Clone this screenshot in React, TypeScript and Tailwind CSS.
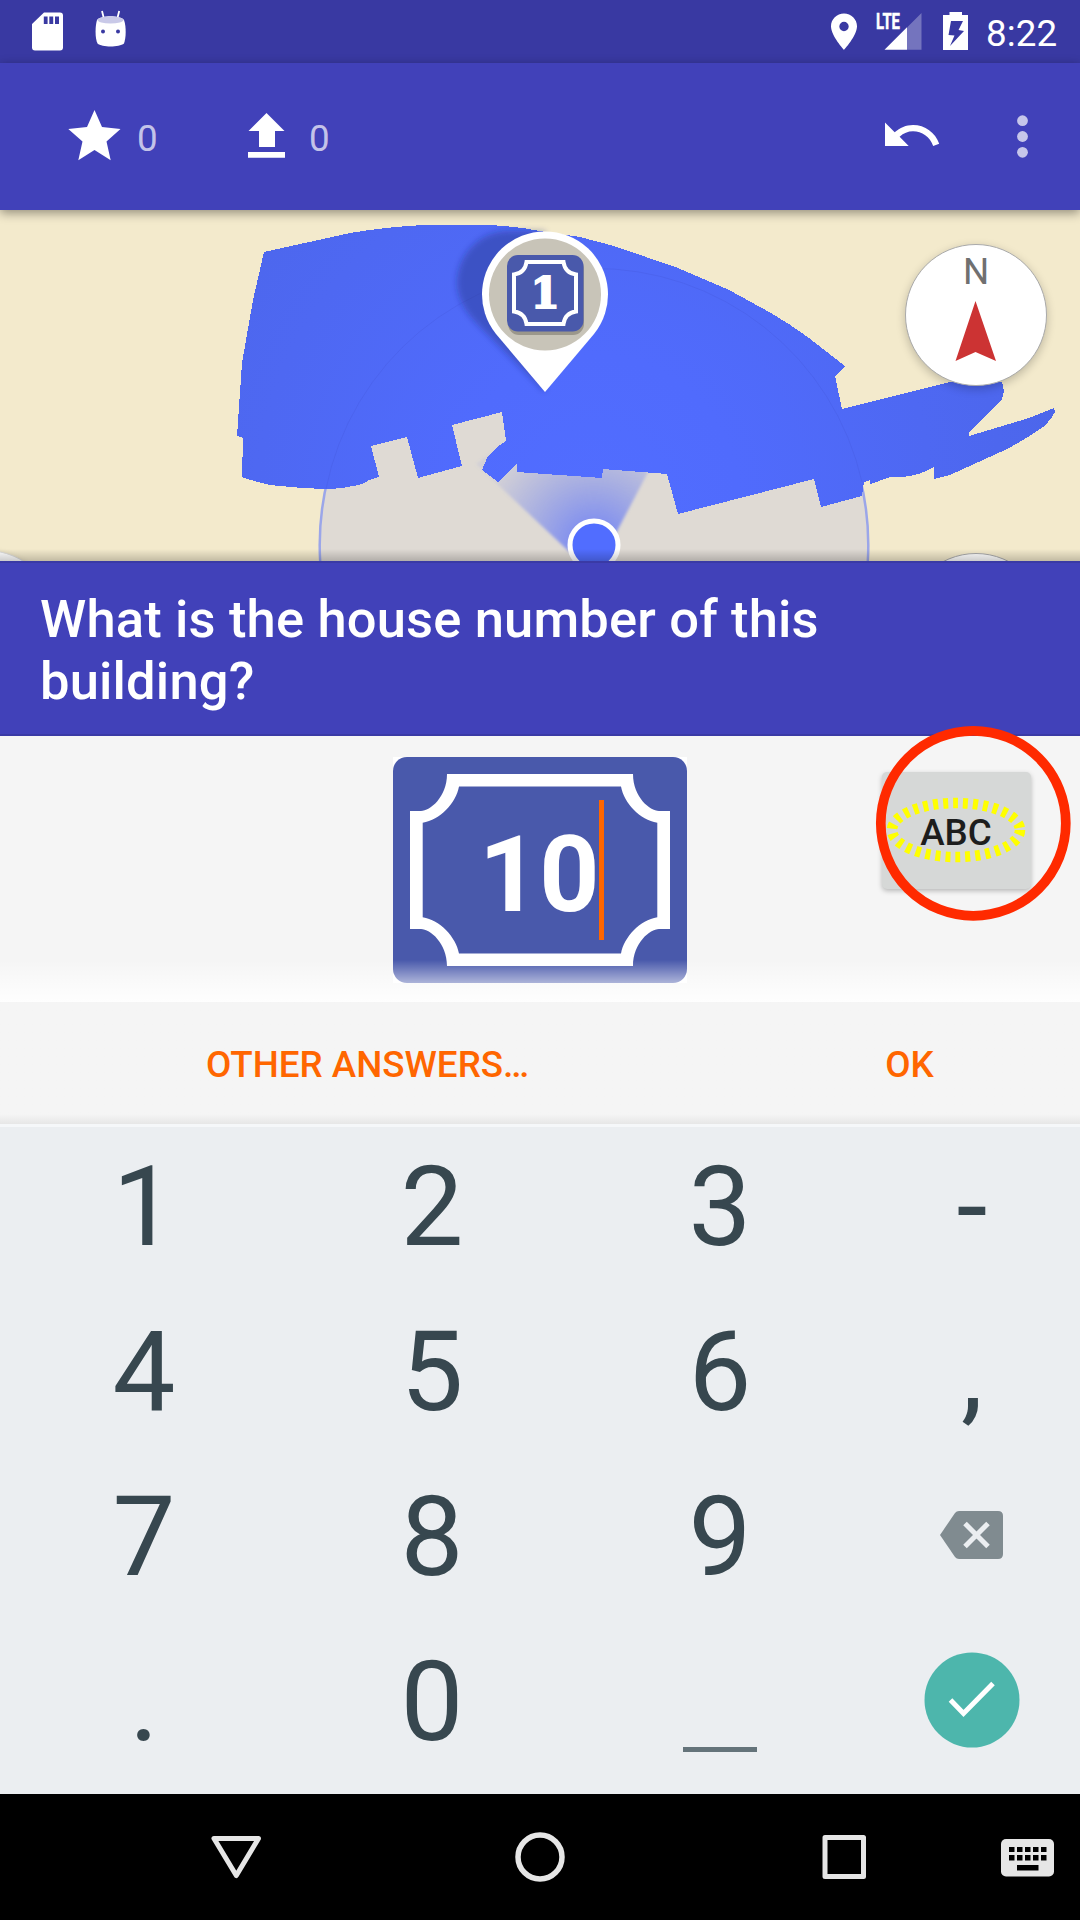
import type { ReactNode } from "react";

function StatusBar() {
  return (
    <div className="flex h-[63px] shrink-0 justify-between bg-[#3939a2]">
      <svg className="h-[63px] w-[160px]" viewBox="0 0 160 63">
        <path
          fillRule="evenodd"
          fill="#fff"
          d="M44 12.5H60a3 3 0 0 1 3 3V47.500a3 3 0 0 1-3 3H35a3 3 0 0 1-3-3V24ZM43.800 16.500V24H47.600V16.500ZM49.300 16.500V24H53.200V16.500ZM55 16.500V24H59V16.500Z"
        />
        <path stroke="#fff" strokeWidth="1.8" d="M102 11 104 19M119.200 11 117.200 19" />
        <path
          fill="#fff"
          d="M97 20C101 15 120 15 124 20C126.500 27 126 38 124 43.500C119 47.500 102 47.500 97.500 43.500C95 38 95 27 97 20Z"
        />
        <ellipse cx="110.500" cy="20" rx="13" ry="3.500" fill="#c9c9e8" />
        <circle cx="103" cy="31.500" r="2" fill="#3939a2" />
        <circle cx="118" cy="31.500" r="2" fill="#3939a2" />
      </svg>
      <div className="flex">
        <svg className="h-[63px] w-[165px]" viewBox="820 0 165 63">
          <path
            fillRule="evenodd"
            fill="#fff"
            d="M844 13.500c-7.200 0-13 5.700-13 12.800 0 9.400 13 23.700 13 23.700s13-14.300 13-23.700c0-7.100-5.800-12.800-13-12.800Zm0 8.300a4.700 4.700 0 1 1 0 9.400 4.700 4.700 0 0 1 0-9.400Z"
          />
          <text
            x="876"
            y="29"
            textLength="24"
            lengthAdjust="spacingAndGlyphs"
            fill="#fff"
            stroke="#fff"
            strokeWidth=".5"
            className="font-['Roboto'] text-[22px] font-bold"
          >
            LTE
          </text>
          <path fill="#fff" fillOpacity=".3" d="M907 27.500 921.500 13V49.700H907Z" />
          <path fill="#fff" d="M884.500 49.700 907 27.300V49.700Z" />
          <path
            fillRule="evenodd"
            fill="#fff"
            d="M949.500 12H962V15H968V50H943V15H949.500ZM951 21 948.500 35 954.500 35.500 950 46 964 31 958.500 30 963 21Z"
          />
        </svg>
        <span className="mr-[21px] w-[74px] pt-[12px] pl-px text-[36.75px] leading-[43px] font-[450] tracking-[0.1px] text-white">
          8:22
        </span>
      </div>
    </div>
  );
}

function Toolbar() {
  return (
    <div className="z-10 flex h-[147px] shrink-0 items-center bg-[#4141b9] shadow-[0_3px_10px_rgba(0,0,0,0.4)]">
      <svg className="ml-[64px] h-[147px] w-[60px]" viewBox="64 63 60 147">
        <path
          fill="#fff"
          d="M94.500 110 102 127 120.500 129 106.500 141.500 110.700 160.300 94.500 150 78.300 160.300 82.500 141.500 68.300 129 87 127Z"
        />
      </svg>
      <span className="ml-[13px] w-[21px] pt-[3px] text-[36.75px] leading-[43px] text-white/70">0</span>
      <svg className="ml-[82px] h-[147px] w-[56px]" viewBox="240 63 56 147">
        <path fill="#fff" d="M266.500 113 284.500 131H275V147H259V131H248.500ZM248 152H285V157.700H248Z" />
      </svg>
      <span className="ml-[13px] w-[21px] pt-[3px] text-[36.75px] leading-[43px] text-white/70">0</span>
      <svg className="ml-auto h-[147px] w-[210px]" viewBox="870 63 210 147">
        <path
          fill="#fff"
          d="M885 122.500 894.700 132.200C900 127.800 906 125 913 125C925 125 935.300 132.500 939.200 143.800L933.200 146C930 137 922 131.300 913 131.300C908 131.300 903.500 133.200 899.600 136.700L908.700 146H885Z"
        />
        <g fill="#fff" fillOpacity=".7">
          <circle cx="1022.500" cy="120.700" r="5.400" />
          <circle cx="1022.500" cy="136.500" r="5.400" />
          <circle cx="1022.500" cy="152.300" r="5.400" />
        </g>
      </svg>
    </div>
  );
}

const AREA =
  "M264 252 350 233Q386 227 423 225H487Q515 226 540 231L580 237 614 246 678 268 729 290 771 313Q790 324 809 338L845 366 835 376 842 409 950 382H1002L1004 391 1002 399 988 413 969 432V436L1029 418 1054 408 1055 412Q1050 421 1043 427Q1026 439 1005 450L950 475 934 479V467Q919 476 902 477H890.500L870.500 484 870 480 864 482 862 496 821 507 814 479 678 514 667 474 603 469 602 478 517 472V463L498 482 482 470 487 458Q494 448 506 441L502 412 452 425 462 466 418 478 407 437 371 446 379 477 369 480Q363 485 353 486Q340 489 323 489Q297 488 270 485Q256 482 242 477L243 438 237 436 242 363 253 300Z";

function MapView() {
  return (
    <div className="relative h-[351px] shrink-0 overflow-hidden bg-[#f3eacc] font-['Roboto']">
      <svg className="block h-[351px] w-full" viewBox="0 210 1080 351">
        <defs>
          <radialGradient id="area" gradientUnits="userSpaceOnUse" cx="594" cy="500" r="480">
            <stop offset="0" stopColor="#516dff" />
            <stop offset=".3" stopColor="#506bfd" />
            <stop offset=".7" stopColor="#4e68f2" />
            <stop offset="1" stopColor="#4c66ea" />
          </radialGradient>
          <radialGradient id="beam" gradientUnits="userSpaceOnUse" cx="594" cy="545" r="118">
            <stop offset=".2" stopColor="#7485f2" stopOpacity=".85" />
            <stop offset="1" stopColor="#7c8de8" stopOpacity=".12" />
          </radialGradient>
          <filter id="soft" x="-20%" y="-20%" width="140%" height="140%">
            <feGaussianBlur stdDeviation="3" />
          </filter>
          <filter id="edge" x="-20%" y="-20%" width="140%" height="140%">
            <feGaussianBlur stdDeviation="1.7" />
          </filter>
        </defs>
        <circle cx="594" cy="545" r="274.300" fill="#dfdad4" stroke="#9ba6e9" strokeWidth="2.500" />
        <path d="M594 575 476 464 530 425 657 455Z" fill="url(#beam)" filter="url(#edge)" />
        <path d={AREA} fill="url(#area)" shapeRendering="crispEdges" />
        <path d="M326 489A274 274 0 0 1 862 482" fill="none" stroke="#4559dc" strokeOpacity=".35" strokeWidth="1" />
        <circle cx="594" cy="545" r="24" fill="#516dff" stroke="#fff" strokeWidth="5" />
        <path
          d="M545 392 476 323C464 310 457 297 457 282A52 52 0 0 1 509 231H545Z"
          fill="#1c246c"
          fillOpacity=".36"
          filter="url(#soft)"
        />
        <path d="M545 392 496 334A63 63 0 1 1 594 334Z" fill="#fff" />
        <circle cx="545" cy="294.500" r="56" fill="#c8c4b8" />
        <rect x="508" y="258" width="76" height="77" rx="11" fill="#9b978b" />
        <rect x="507" y="255" width="76.500" height="76.500" rx="11" fill="#4959ab" />
        <path
          d="M526.500 262H563.500Q565 273 576 274.500V311.500Q565 313 563.500 324H526.500Q525 313 514 311.500V274.500Q525 273 526.500 262Z"
          fill="none"
          stroke="#fff"
          strokeWidth="4"
        />
        <text
          x="545"
          y="308"
          textAnchor="middle"
          fill="#fff"
          stroke="#fff"
          strokeWidth="1.8"
          className="font-['DejaVu_Serif'] text-[42px] font-bold"
        >
          1
        </text>
      </svg>
      <div className="absolute top-[34px] left-[905px] flex h-[142px] w-[142px] flex-col items-center rounded-full border border-[#aaa] bg-white shadow-[0_3px_10px_rgba(0,0,0,0.22)]">
        <span className="mt-[5px] text-[36.75px] leading-[43px] text-[#707070]">N</span>
        <svg className="mt-[8px] h-[60px] w-[42px]" viewBox="0 0 42 60">
          <path fill="#cc3333" d="M20.500 0 41 60 20.500 51 .5 60Z" />
        </svg>
      </div>
      <div className="absolute top-[343px] left-[905px] h-[142px] w-[142px] rounded-full border border-[#aaa] bg-white" />
      <div className="absolute top-[340px] left-[-85px] h-[142px] w-[142px] rounded-full border border-[#ddd] bg-white shadow-[0_2px_6px_rgba(0,0,0,0.15)]" />
      <div className="absolute bottom-0 left-0 h-[12px] w-full bg-linear-to-t from-black/20 to-transparent" />
    </div>
  );
}

function HouseNumberSign() {
  return (
    <div className="relative h-[226px] w-[294px] bg-white">
      <svg className="block h-full w-full" viewBox="393 757 294 226">
        <rect x="393" y="757" width="294" height="226" rx="14" fill="#4959ab" />
        <path
          fillRule="evenodd"
          fill="#fff"
          d="M447 774H633C633 797 650 811 659 811H670V929H659C650 929 633 943 633 966H447C447 943 430 929 421 929H410V811H421C430 811 447 797 447 774ZM459 786.500C456 803 440 820 422.700 822.800V917.200C440 920 456 937 459 953.500H621C624 937 640 920 657.300 917.200V822.800C640 820 624 803 621 786.500Z"
        />
      </svg>
      <div className="absolute top-[43px] left-[86px] flex h-[140px] items-center">
        <span className="pt-[12px] text-[105px] leading-[140px] font-bold text-white">10</span>
        <span className="h-[140px] w-[5px] bg-[#ff6600]" />
      </div>
    </div>
  );
}

function Key({ children }: { children?: ReactNode }) {
  return <div className="flex h-[165px] items-center justify-center">{children}</div>;
}

function Keypad() {
  return (
    <div className="grid h-[667px] shrink-0 grid-cols-[288px_288px_288px_216px] content-start bg-[#ebeef1] text-[112px] leading-[131px] text-[#37474f]">
      {["1", "2", "3", "-", "4", "5", "6", ",", "7", "8", "9"].map((k) => (
        <Key key={k}>
          <span className="pb-[6px]">{k}</span>
        </Key>
      ))}
      <Key>
        <svg className="mb-[10px] h-[48px] w-[64px]" viewBox="0 0 64 48">
          <path fill="#808b90" d="M0 24 15 2Q16.500 0 19 0H58Q63 0 63 5V43Q63 48 58 48H19Q16.500 48 15 46Z" />
          <path stroke="#ebeef1" strokeWidth="5" d="M25 12.500 48 35.500M48 12.500 25 35.500" />
        </svg>
      </Key>
      <Key>
        <span className="pb-[6px]">.</span>
      </Key>
      <Key>
        <span className="pb-[6px]">0</span>
      </Key>
      <Key>
        <div className="mt-[89px] h-[5px] w-[74px] bg-[#64737a]" />
      </Key>
      <Key>
        <svg className="mb-[9px] h-[96px] w-[96px]" viewBox="924 1652 96 96">
          <circle cx="972" cy="1700" r="47.500" fill="#4db6ac" />
          <path fill="none" stroke="#fff" strokeWidth="5" d="M950.500 1700 963.500 1713.500 993 1683.500" />
        </svg>
      </Key>
    </div>
  );
}

function NavBar() {
  return (
    <div className="h-[126px] shrink-0 bg-black">
      <svg className="block h-full w-full" viewBox="0 1794 1080 126">
        <g fill="none" stroke="#e6e6e6" strokeWidth="5" strokeLinejoin="round">
          <path d="M214 1838.500H258.500L236.300 1875.500Z" />
          <circle cx="540" cy="1857" r="22" strokeWidth="5.500" />
          <rect x="825" y="1837.500" width="38.500" height="39" />
        </g>
        <rect x="1001" y="1839" width="53" height="37.500" rx="5" fill="#e6e6e6" />
        {[1009, 1017, 1025, 1033, 1041].map((x) => (
          <g key={x}>
            <rect x={x} y="1847" width="5.500" height="5" />
            <rect x={x} y="1855" width="5.500" height="5.500" />
          </g>
        ))}
        <rect x="1017" y="1865" width="21.500" height="5.500" />
      </svg>
    </div>
  );
}

export default function App() {
  return (
    <div className="relative flex h-[1920px] w-[1080px] flex-col overflow-hidden bg-[#f5f5f5] font-['Roboto',sans-serif]">
      <StatusBar />
      <Toolbar />
      <MapView />
      <div className="h-[175px] shrink-0 border-y-2 border-[#3a3aa5] bg-[#4141b9] px-[40px] pt-[25px] text-[52.5px] leading-[62px] font-medium tracking-[0.16px] text-white">
        What is the house number of this
        <br />
        building?
      </div>
      <div className="relative h-[266px] shrink-0 bg-[#f5f5f5]">
        <div className="flex justify-center pt-[21px]">
          <HouseNumberSign />
        </div>
        <div className="absolute top-[36px] left-[882px] flex h-[117px] w-[149px] items-center justify-center rounded-[5px] bg-[#d6d8d7] text-[36.75px] font-medium text-[#1d1d1d] shadow-[0_2px_5px_rgba(0,0,0,0.25)]">
          <span className="pt-[4px] pr-px">ABC</span>
        </div>
        <div className="absolute bottom-0 left-0 h-[42px] w-full bg-linear-to-b from-white/0 via-white/55 via-55% to-white/90" />
        <svg className="absolute top-[-20px] left-[870px] h-[210px] w-[210px]" viewBox="870 716 210 210">
          <ellipse cx="956" cy="830" rx="64" ry="27" fill="none" stroke="#ffff00" strokeWidth="10.500" strokeDasharray="5 5" />
          <circle cx="973.300" cy="823.300" r="92.500" fill="none" stroke="#ff2a00" strokeWidth="9.700" />
        </svg>
      </div>
      <div className="flex h-[122px] shrink-0 items-center bg-linear-to-b from-[#f5f5f5] from-92% to-[#e6e6e6] text-[36.75px] font-medium text-[#ff6600]">
        <span className="w-[734px] pt-[4px] pl-[5px] text-center">OTHER ANSWERS…</span>
        <span className="w-[352px] pt-[4px] pl-[9px] text-center">OK</span>
      </div>
      <div className="h-[3px] shrink-0 bg-[#f5f7f9]" />
      <Keypad />
      <NavBar />
    </div>
  );
}
